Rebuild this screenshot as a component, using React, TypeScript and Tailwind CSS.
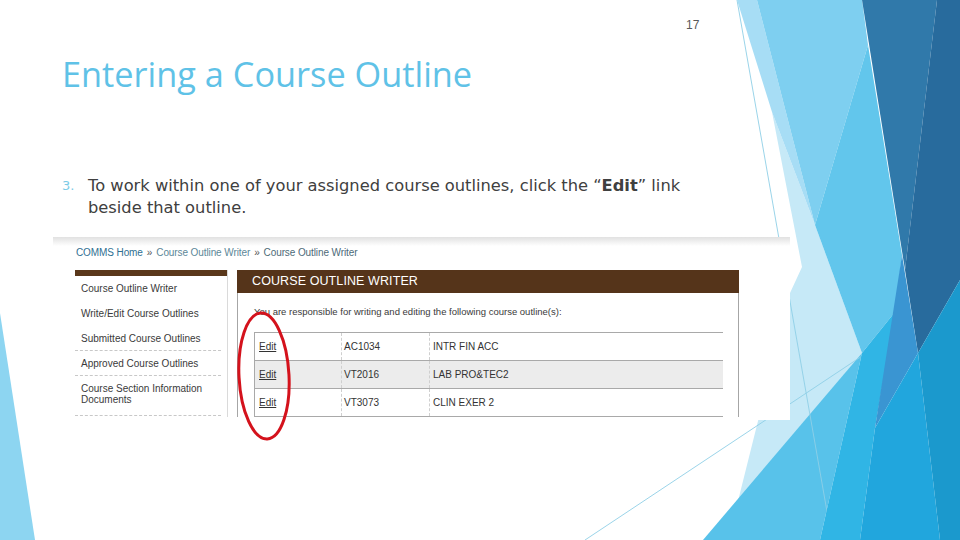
import React from 'react';

const sideItems = [
  { label: 'Course Outline Writer', dashed: false },
  { label: 'Write/Edit Course Outlines', dashed: false },
  { label: 'Submitted Course Outlines', dashed: true },
  { label: 'Approved Course Outlines', dashed: true },
];

const rows = [
  { code: 'AC1034', title: 'INTR FIN ACC' },
  { code: 'VT2016', title: 'LAB PRO&TEC2' },
  { code: 'VT3073', title: 'CLIN EXER 2' },
];

function Facets() {
  return (
    <svg className="absolute inset-0" width="960" height="540" viewBox="0 0 960 540">
      <polygon points="0,313 35,540 0,540" fill="#8dd5f1" />
      <polygon points="772,112 815,225 862,353 737,505 790,293 802,267" fill="#c6e9f7" />
      <polygon points="703,540 820,540 862,353" fill="#58c2ea" />
      <line x1="737" y1="0" x2="832" y2="540" stroke="#8fcfe7" strokeWidth="0.9" />
      <line x1="585" y1="540" x2="960" y2="291" stroke="#8fcfe7" strokeWidth="0.9" />
      <polygon points="737,0 757,0 815,225 772,112" fill="#a7ddf5" />
      <polygon points="757,0 862,0 868,45 815,225" fill="#7ecff0" />
      <polygon points="868,45 902,255 895,312 862,353 815,225" fill="#62c6ec" />
      <polygon points="862,353 895,312 875,428 860,540 820,540" fill="#30b5e5" />
      <polygon points="862,0 937,0 905,270" fill="#3079aa" />
      <polygon points="937,0 960,0 960,280 918,353 905,270" fill="#286b9d" />
      <polygon points="902,255 918,353 875,428" fill="#3a95d2" />
      <polygon points="875,428 918,353 940,540 860,540" fill="#21a6dd" />
      <polygon points="918,353 960,280 960,540 940,540" fill="#1b99cd" />
    </svg>
  );
}

function Screenshot() {
  return (
    <div className="ml-[53px] w-[737px] h-[183px] bg-white flex flex-col font-['Liberation_Sans',Arial,sans-serif] overflow-hidden">
      <div className="h-[9px] shrink-0 bg-linear-to-b from-[#e1e1e1] to-white" />
      <div className="pl-[23px] pt-[1px] text-[10px] leading-[12px] text-[#2f6f92] tracking-[-0.1px]">
        <span>COMMS Home</span>
        <span className="text-[#555] px-[4px]">»</span>
        <span className="text-[#5c8798]">Course Outline Writer</span>
        <span className="text-[#555] px-[4px]">»</span>
        <span className="text-[#4d6a78]">Course Outline Writer</span>
      </div>
      <div className="flex mt-[11px] pl-[22px]">
        <div className="w-[153px] border-r border-[#dadada] flex flex-col">
          <div className="h-[6px] bg-[#5a381b]" />
          {sideItems.map((it) => (
            <div
              key={it.label}
              className={`h-[25px] flex items-center pl-[6px] text-[10px] text-[#3a3a3a] mr-[6px] ${
                it.dashed ? 'border-b border-dashed border-[#c8c8c8]' : ''
              }`}
            >
              {it.label}
            </div>
          ))}
          <div className="h-[40px] pt-[7px] pl-[6px] text-[10px] leading-[11px] text-[#3a3a3a] mr-[6px] border-b border-dashed border-[#c8c8c8]">
            Course Section Information
            <br />
            Documents
          </div>
        </div>
        <div className="ml-[9px] w-[502px] flex flex-col">
          <div className="h-[23px] bg-[#55341a] flex items-center pl-[15px] text-[12.5px] text-white tracking-[0.1px]">
            COURSE OUTLINE WRITER
          </div>
          <div className="flex-1 border-x border-[#a6a6a6] pl-[16px] pr-[16px]">
            <div className="pt-[13px] text-[9.5px] leading-[12px] text-[#3a3a3a]">
              You are responsible for writing and editing the following course outline(s):
            </div>
            <div className="mt-[14px] border-t border-[#a9a9a9] border-l w-[469px]">
              {rows.map((r, i) => (
                <div
                  key={r.code}
                  className={`flex h-[28px] items-center border-b border-[#a9a9a9] text-[10px] text-[#333] ${
                    i === 1 ? 'bg-[#ececec]' : 'bg-white'
                  }`}
                >
                  <div className="w-[87px] h-full flex items-center pl-[4px] border-r border-dashed border-[#cfcfcf]">
                    <span className="underline">Edit</span>
                  </div>
                  <div className="w-[88px] h-full flex items-center pl-[2px] border-r border-dashed border-[#cfcfcf]">
                    {r.code}
                  </div>
                  <div className="pl-[3px]">{r.title}</div>
                </div>
              ))}
            </div>
          </div>
        </div>
      </div>
    </div>
  );
}

export default function App() {
  return (
    <div className="relative w-[960px] h-[540px] overflow-hidden bg-white">
      <Facets />
      <div className="relative flex flex-col">
        <div className="h-[32px] pt-[18px] pl-[686px] text-[12px] leading-[14px] text-[#595959] font-['Liberation_Sans',Arial,sans-serif]">
          17
        </div>
        <h1 className="pl-[62px] mt-[22px] h-[40px] text-[34.3px] leading-[40px] text-[#5fc2e7] font-['Open_Sans',sans-serif]">
          Entering a Course Outline
        </h1>
        <div className="flex pl-[62px] mt-[81px] text-[16.3px] leading-[22px] text-[#404040] font-['DejaVu_Sans',Verdana,sans-serif]">
          <span className="w-[26px] text-[#7ccbe6] text-[13px]">3.</span>
          <p className="w-[600px]">
            To work within one of your assigned course outlines, click the “<b>Edit</b>” link beside that outline.
          </p>
        </div>
        <div className="mt-[18px]">
          <Screenshot />
        </div>
      </div>
      <svg className="absolute left-0 top-0 pointer-events-none" width="960" height="540">
        <ellipse
          cx="264"
          cy="376"
          rx="25"
          ry="63"
          fill="none"
          stroke="#d4121c"
          strokeWidth="3"
          transform="rotate(-3 264 376)"
        />
      </svg>
    </div>
  );
}
